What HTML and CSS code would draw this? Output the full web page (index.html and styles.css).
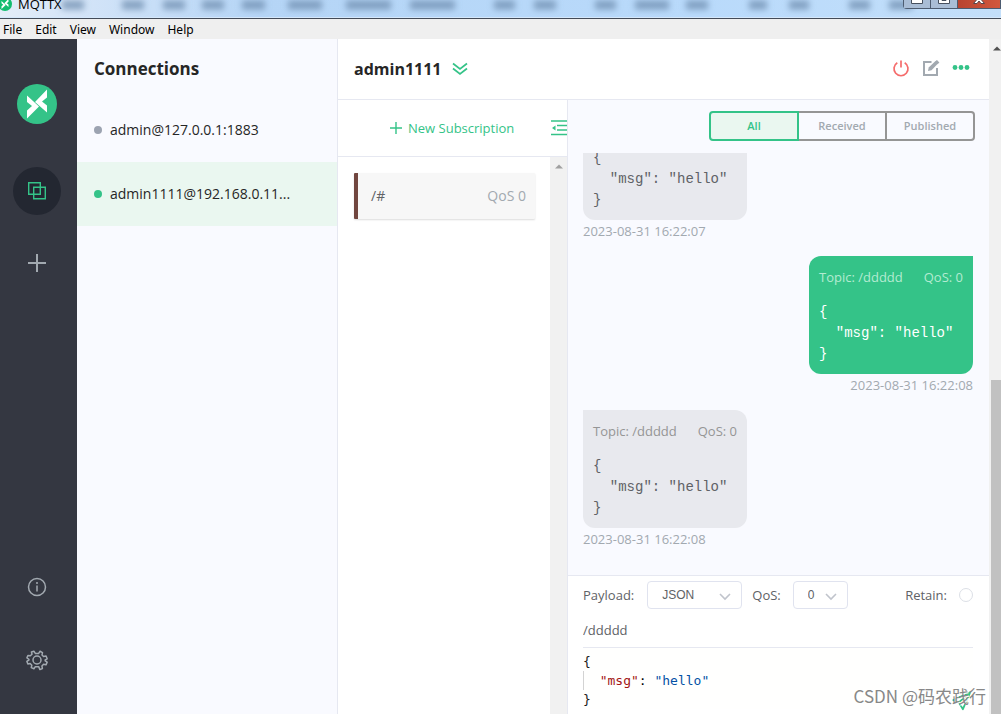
FILE: index.html
```html
<!DOCTYPE html>
<html lang="en">
<head>
<meta charset="utf-8">
<title>MQTTX</title>
<link rel="stylesheet" href="styles.css">
</head>
<body>
<header class="titlebar">
  <svg class="glass" aria-hidden="true" viewBox="0 0 1001 19" preserveAspectRatio="xMidYMin slice">
    <defs><filter id="soft" filterUnits="userSpaceOnUse" x="0" y="-20" width="1001" height="60"><feGaussianBlur stdDeviation="3"/></filter></defs>
    <path filter="url(#soft)" fill="none" stroke="#6d8cae" stroke-width="9" stroke-opacity=".75" d="M62 5h22M122 5h22M163 5h22M202 5h22M242 5h23M288 5h34M346 5h45M410 5h45M494 5h21M534 5h22M595 5h21M635 5h34M686 5h22M749 5h18M789 5h20M849 5h21M889 5h24"/>
  </svg>
  <div class="app-title">
    <svg class="app-icon" viewBox="0 0 40 40"><circle cx="20" cy="20" r="20" fill="#13bd70"/><path fill="#fff" d="M10 11.500l12 11L10 34.500v-8l5-4.500-5-4zM30 5.500v8l-5 4 5 4v7L18 18z"/></svg>
    <span>MQTTX</span>
  </div>
  <div class="window-buttons">
    <button class="win" aria-label="Minimize"><svg viewBox="0 0 14 8"><path d="M1.500-2h11v5.500h-11z" fill="#fff" stroke="#46505e"/></svg></button>
    <button class="win" aria-label="Maximize"><svg viewBox="0 0 14 8"><path d="M1.500-4h11v7.500h-11z" fill="#fff" stroke="#46505e"/><path d="M5-2h4v2.500H5z" fill="#8c9db3" stroke="#46505e"/></svg></button>
    <button class="win win-close" aria-label="Close"><svg viewBox="0 0 14 8"><path d="M7-3l5.500 6.500h-3.500L7 1 5 3.500H1.500z" fill="#fff" stroke="#59464b"/></svg></button>
  </div>
</header>
<nav class="menubar">
  <button>File</button><button>Edit</button><button>View</button><button>Window</button><button>Help</button>
</nav>
<div class="app">
  <aside class="rail">
    <a class="logo" href="#home" aria-label="Home"><svg viewBox="0 0 40 40"><circle cx="20" cy="20" r="20" fill="#34c388"/><path fill="#fff" d="M10 11.500l12 11L10 34.500v-8l5-4.500-5-4zM30 5.500v8l-5 4 5 4v7L18 18z"/></svg></a>
    <a class="rail-item active" href="#connections" aria-label="Connections"><svg viewBox="0 0 20 20" fill="none" stroke="#34c388" stroke-width="1.400"><path d="M1.700 1.700h11.600v11.600H1.700zM6.700 6.200h11.600v11.600H6.700z"/></svg></a>
    <button class="rail-item" aria-label="New connection"><svg viewBox="0 0 20 20" stroke="#a2a9b0" stroke-width="2"><path d="M1 10h18M10 1v18"/></svg></button>
    <div class="rail-space"></div>
    <a class="rail-item" href="#about" aria-label="About"><svg viewBox="0 0 20 20" fill="none" stroke="#a2a9b0" stroke-width="1.500"><circle cx="10" cy="10" r="8.500"/><path d="M10 8.500v6M10 5v2"/></svg></a>
    <a class="rail-item" href="#settings" aria-label="Settings"><svg viewBox="0 0 24 24" fill="none" stroke="#a2a9b0" stroke-width="1.800" stroke-linejoin="round"><circle cx="12" cy="12" r="4.800"/><path d="M8.300 1.500L10 4.100h4l1.700-2.600 2.900 1.600-.6 2.900 1.900 1.900 3-.6 1.300 3.300-2.400 1.400v1l2.400 1.600-1.400 3.200-2.900-.6-2 2 .6 3-3 1.300L14 20h-4l-1.700 2.500-3.200-1.300.7-3-2-2-2.800.6L-.2 13.600 2.300 12v-.9L-.1 9.400 1.100 6.500l2.900.5 2-2-.7-2.600z"/></svg></a>
  </aside>
  <section class="connections">
    <h1>Connections</h1>
    <a class="connection" href="#c1"><span class="dot"></span>admin@127.0.0.1:1883</a>
    <a class="connection selected" href="#c2"><span class="dot"></span>admin1111@192.168.0.11...</a>
  </section>
  <main class="client">
    <header class="client-head">
      <h2>admin1111</h2>
      <button class="icon" aria-label="Expand"><svg width="16" height="16" viewBox="0 0 16 16" fill="none" stroke="#34c388" stroke-width="1.700"><path d="M1 2.500l7 5.500 7-5.500M1 7.500L8 13l7-5.500"/></svg></button>
      <div class="head-actions">
        <button class="icon" aria-label="Disconnect"><svg width="18" height="18" viewBox="0 0 18 18" fill="none" stroke="#f56c6c" stroke-width="1.700"><path d="M5.300 2.800a7 7 0 1 0 7.400 0M9 .5v7"/></svg></button>
        <button class="icon" aria-label="Edit connection"><svg width="18" height="18" viewBox="0 0 18 18" fill="none" stroke="#a2a9b0" stroke-width="2"><path d="M9.500 2H2v13h13V8"/><path d="M6 11l.7-3.500L13.500 1 16 3.500 9.500 10.200z" fill="#a2a9b0" stroke="none"/><path d="M14 .8l2.500 2.500" stroke-width="2.500"/></svg></button>
        <button class="icon" aria-label="More"><svg width="18" height="18" viewBox="0 0 18 18" fill="#34c388"><circle cx="3" cy="7.500" r="2.400"/><circle cx="9" cy="7.500" r="2.400"/><circle cx="15" cy="7.500" r="2.400"/></svg></button>
      </div>
    </header>
    <div class="client-body">
      <section class="subs">
        <div class="subs-head">
          <button class="new-sub"><svg width="12" height="12" viewBox="0 0 12 12" stroke="#34c388" stroke-width="1.400"><path d="M0 6h12M6 0v12"/></svg>New Subscription</button>
          <button class="icon fold" aria-label="Hide subscriptions"><svg width="16" height="16" viewBox="0 0 16 16" stroke="#34c388" stroke-width="1.500"><path d="M0 1h16M6 5.500h10M6 10h10M0 14.500h16"/><path d="M1 8l3.500-2.500v5z" fill="#34c388" stroke="none"/></svg></button>
        </div>
        <div class="subs-body">
          <div class="subs-list"><div class="topic"><span>/#</span><span class="qos">QoS 0</span></div></div>
          <div class="scroll-gutter"><svg width="8" height="5" viewBox="0 0 8 5"><path d="M0 4.500L4 .5l4 4z" fill="#a0a0a0"/></svg></div>
        </div>
      </section>
      <section class="messages">
        <div class="filters">
          <button class="filter on">All</button><button class="filter">Received</button><button class="filter">Published</button>
        </div>
        <div class="list">
          <article class="message">
            <div class="bubble"><pre>{
  "msg": "hello"
}</pre></div>
            <time>2023-08-31 16:22:07</time>
          </article>
          <article class="message sent">
            <div class="bubble"><p class="meta"><span>Topic: /ddddd</span><span>QoS: 0</span></p><pre>{
  "msg": "hello"
}</pre></div>
            <time>2023-08-31 16:22:08</time>
          </article>
          <article class="message">
            <div class="bubble"><p class="meta"><span>Topic: /ddddd</span><span>QoS: 0</span></p><pre>{
  "msg": "hello"
}</pre></div>
            <time>2023-08-31 16:22:08</time>
          </article>
        </div>
        <form class="publish">
          <div class="options">
            <label for="payload">Payload:</label>
            <span class="select"><select id="payload" class="payload"><option>JSON</option></select><svg class="caret" width="12" height="8" viewBox="0 0 12 8"><path d="M1 1l5 5 5-5" fill="none" stroke="#c0c4cc" stroke-width="1.600"/></svg></span>
            <label for="qos">QoS:</label>
            <span class="select"><select id="qos" class="level"><option>0</option></select><svg class="caret" width="12" height="8" viewBox="0 0 12 8"><path d="M1 1l5 5 5-5" fill="none" stroke="#c0c4cc" stroke-width="1.600"/></svg></span>
            <label class="retain" for="retain">Retain:</label>
            <input id="retain" class="radio" type="radio">
          </div>
          <input class="topic-input" type="text" aria-label="Topic" value="/ddddd">
          <pre class="editor"><span class="brace">{</span>
<span class="guide">  </span><span class="key">"msg"</span>: <span class="string">"hello"</span>
<span class="brace">}</span></pre>
          <button class="send" type="button" aria-label="Send"><svg width="20" height="20" viewBox="0 0 22 22" fill="none" stroke="#34c388" stroke-width="2" stroke-linejoin="round"><path d="M20 1.500L1.500 10l6 2.500L12 20zM7.500 12.500L20 1.500"/></svg></button>
        </form>
      </section>
    </div>
  </main>
  <div class="page-scroll">
    <svg width="8" height="5" viewBox="0 0 8 5"><path d="M0 4.500L4 .5l4 4z" fill="#505050"/></svg>
    <div class="thumb"></div>
  </div>
</div>
<div class="watermark">CSDN @码农践行</div>
</body>
</html>
```
FILE: styles.css
```css
* { box-sizing: border-box; }
body {
  margin: 0;
  height: 100vh;
  display: flex;
  flex-direction: column;
  overflow: hidden;
  position: relative;
  font: 13px/22px "Open Sans", "Noto Sans", sans-serif;
  color: #262626;
  background: #fff;
}
button, input, select { font: inherit; color: inherit; margin: 0; }
button { border: 0; padding: 0; background: none; }
a { color: inherit; text-decoration: none; }
svg { display: block; flex: none; }
h1, h2, p, pre { margin: 0; }

.titlebar {
  flex: none;
  height: 19px;
  display: flex;
  justify-content: space-between;
  align-items: flex-start;
  position: relative;
  overflow: hidden;
  border-bottom: 1px solid #434b58;
  background: linear-gradient(90deg, #e4edf8 0, #d7e6f8 60px, #b5d5f6 260px, #b9dafb 70%, #c3dffa);
  box-shadow: inset 0 -1px #d5e8fb;
}
.glass { position: absolute; left: 0; top: 0; width: 100%; height: 18px; }
.app-title {
  display: flex;
  align-items: flex-start;
  gap: 6px;
  position: relative;
  font: 13px/16px "Open Sans", sans-serif;
  color: #000;
}
.app-title span { margin-top: -4px; }
.app-icon { width: 14px; height: 14px; margin: -3px 0 0 -2px; }
.window-buttons { display: flex; position: relative; width: 98px; height: 9px; border: 1px solid #4d5c70; border-top: 0; border-radius: 0 0 0 4px; }
.win { width: 27px; border-right: 1px solid #4d5c70; background: #a9bdd5; display: flex; justify-content: center; }
.win svg { width: 14px; height: 8px; }
.win-close { flex: 1; border: 0; background: linear-gradient(90deg, #b84330, #d2583d); }

.menubar { flex: none; display: flex; gap: 13px; height: 20px; padding: 1px 3px 0; background: #efefef; }
.menubar button { font: 12px/20px "Noto Sans", sans-serif; color: #000; }

.app { flex: 1; min-height: 0; display: flex; }
.rail { flex: none; width: 77px; padding: 45px 0 30px; background: #343741; display: flex; flex-direction: column; align-items: center; }
.rail .logo { margin: 0 3px 43px 0; }
.logo svg { width: 40px; height: 40px; }
.rail-item { width: 48px; height: 48px; margin: 0 3px 25px 0; border-radius: 50%; display: flex; align-items: center; justify-content: center; }
.rail .active { margin-bottom: 24px; }
.rail-item:last-child { margin-bottom: 0; }
.rail-item svg { width: 20px; height: 20px; overflow: visible; }
.active { background: #232731; }
.rail-space { flex: 1; }

.connections { flex: none; width: 261px; background: #f9faff; border-right: 1px solid #e6e8f1; }
.connections h1 { padding: 18px 17px 17px; font-size: 17px; line-height: 24px; }
.connection { display: flex; align-items: center; gap: 8px; height: 64px; padding: 0 17px; font-size: 14px; white-space: nowrap; }
.dot { width: 8px; height: 8px; border-radius: 50%; background: #9ca3b1; }
.selected { background: #eaf7f0; }
.selected .dot { background: #34c388; }

.client { flex: 1; min-width: 0; display: flex; flex-direction: column; }
.client-head { flex: none; height: 61px; padding: 0 19px 0 16px; display: flex; align-items: center; gap: 10px; border-bottom: 1px solid #e6e8f1; }
.client-head h2 { font-size: 16px; }
.head-actions { margin-left: auto; display: flex; gap: 12px; }
.client-body { flex: 1; min-height: 0; display: flex; }
.subs { flex: none; width: 230px; border-right: 1px solid #e6e8f1; display: flex; flex-direction: column; overflow: hidden; }
.subs-head { height: 57px; flex: none; padding-left: 52px; display: flex; align-items: center; justify-content: space-between; border-bottom: 1px solid #e6e8f1; }
.new-sub { display: flex; align-items: center; gap: 6px; color: #34c388; font-size: 13px; white-space: nowrap; }
.subs-body { flex: 1; display: flex; }
.subs-list { flex: 1; padding: 16px 15px 16px 16px; }
.topic { display: flex; align-items: center; justify-content: space-between; height: 46px; padding: 0 9px 0 13px; border-left: 4px solid #71463f; border-radius: 1px; background: #f7f7f7; box-shadow: 0 1px 2px #dcdcdc; font-size: 14px; color: #606266; }
.qos { color: #a2a9b0; }
.scroll-gutter { width: 17px; background: #f1f1f1; padding-top: 7px; display: flex; justify-content: center; align-items: flex-start; }

.messages { flex: 1; min-width: 0; display: flex; flex-direction: column; background: #f9faff; }
.filters { flex: none; display: flex; justify-content: flex-end; padding: 11px 14px 12px; }
.filter { width: 88px; height: 30px; border: 2px solid #959595; border-left: 0; background: #f9faff; color: #a2a9b0; font-size: 11px; font-weight: 600; }
.filter:last-child { border-radius: 0 4px 4px 0; }
.on { width: 90px; border: 2px solid #34c388; border-radius: 4px 0 0 4px; background: #eaf7f0; color: #34c388; }
.list { flex: 1; min-height: 0; overflow: hidden; display: flex; flex-direction: column; justify-content: flex-end; gap: 14px; padding: 0 16px 25px 15px; }
.message { flex: none; display: flex; flex-direction: column; align-items: flex-start; }
.bubble { min-width: 164px; padding: 10px 10px 9px; border-radius: 0 12px 12px 12px; background: #e8e9ee; color: #606266; }
.meta { display: flex; justify-content: space-between; gap: 16px; margin-bottom: 14px; color: #959595; }
.bubble pre { font: 14px/21px "Liberation Mono", monospace; }
.message time { color: #a2a9b0; }
.sent { align-items: flex-end; }
.sent .bubble { background: #34c388; color: #fff; border-radius: 12px 0 12px 12px; }
.sent .meta { color: #b3ebd1; }

.publish { flex: none; height: 139px; padding: 5px 16px 0 15px; border-top: 1px solid #e6e8f1; background: #fff; position: relative; overflow: hidden; }
.options { display: flex; align-items: center; color: #606266; }
.options label { margin-right: 12px; }
.options label:first-child { margin-right: 13px; }
.select { position: relative; margin-right: 10px; }
.select select { display: block; height: 28px; padding: 0 14px; appearance: none; border: 1px solid #e0e3ef; border-radius: 4px; background: #fff; font: 12px "Liberation Sans", sans-serif; }
.payload { width: 95px; }
.level { width: 55px; }
.caret { position: absolute; right: 11px; top: 12px; }
.options .retain { margin-left: auto; }
.radio { appearance: none; width: 14px; height: 14px; border: 1px solid #dcdfe6; border-radius: 50%; background: #fff; }
.topic-input { display: block; width: 100%; height: 39px; padding: 4px 0 0; border: 0; border-bottom: 1px solid #e6e8f1; background: none; color: #606266; outline: 0; }
.editor { padding-top: 4px; font: 13px/19px "DejaVu Sans Mono", monospace; color: #000; background: #fffffe; }
.brace { color: #1a1a1a; }
.guide { display: inline-block; border-left: 1px solid #d3d3d3; }
.key { color: #a31515; }
.string { color: #0451a5; }
.send { position: absolute; right: 17px; bottom: 3px; }

.page-scroll { flex: none; width: 12px; background: #f1f1f1; display: flex; flex-direction: column; align-items: flex-end; padding: 7px 0 0 2px; overflow: hidden; }
.thumb { width: 100%; margin-top: auto; height: 50%; background: #c1c1c1; }
.watermark { position: absolute; right: 15px; bottom: 6px; font: 17px/24px "Noto Sans CJK SC", sans-serif; color: #888; text-shadow: 1px 1px #fff; pointer-events: none; }
```
